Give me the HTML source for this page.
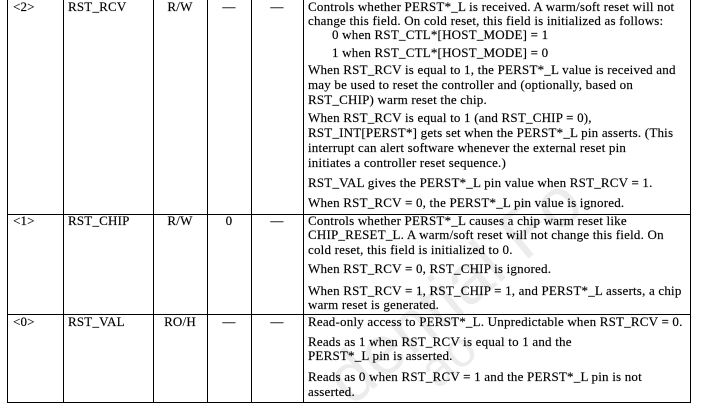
<!DOCTYPE html>
<html><head><meta charset="utf-8"><style>
html{overflow:hidden;width:704px;height:416px;}
html,body{margin:0;padding:0;background:#fff;}
body{width:704px;height:416px;position:relative;overflow:hidden;font-family:"Liberation Serif",serif;font-size:13px;color:#000;}
.t{position:absolute;white-space:nowrap;line-height:16px;letter-spacing:0.2px;-webkit-text-stroke:0.15px #000;}
.v{position:absolute;background:#000;width:1px;}
.h{position:absolute;background:#000;height:1px;}
.c{text-align:center;}
.wm{position:absolute;font-family:"Liberation Sans",sans-serif;font-size:70px;color:#ececec;transform:rotate(-40deg);white-space:nowrap;}
</style></head><body>
<div class="wm" style="left:300px;top:250px;">dential Fo</div>
<div class="wm" style="left:420px;top:330px;font-size:50px;">ao</div>

<div class="v" style="left:7px;top:0;height:403px"></div>
<div class="v" style="left:63px;top:0;height:403px"></div>
<div class="v" style="left:153px;top:0;height:403px"></div>
<div class="v" style="left:207px;top:0;height:403px"></div>
<div class="v" style="left:251px;top:0;height:403px"></div>
<div class="v" style="left:303px;top:0;height:403px"></div>
<div class="v" style="left:690px;top:0;height:403px"></div>
<div class="h" style="left:7px;top:214px;width:684px"></div>
<div class="h" style="left:7px;top:314px;width:684px"></div>
<div class="h" style="left:7px;top:402px;width:684px"></div>

<div class="t" style="left:13px;top:-1px">&lt;2&gt;</div>
<div class="t" style="left:68px;top:-1px">RST_RCV</div>
<div class="t c" style="left:153px;width:54px;top:-1px">R/W</div>
<div class="t c" style="left:207px;width:44px;top:-1px">—</div>
<div class="t c" style="left:251px;width:52px;top:-1px">—</div>

<div class="t" style="left:13px;top:213px">&lt;1&gt;</div>
<div class="t" style="left:68px;top:213px">RST_CHIP</div>
<div class="t c" style="left:153px;width:54px;top:213px">R/W</div>
<div class="t c" style="left:207px;width:44px;top:213px">0</div>
<div class="t c" style="left:251px;width:52px;top:213px">—</div>

<div class="t" style="left:13px;top:314px">&lt;0&gt;</div>
<div class="t" style="left:68px;top:314px">RST_VAL</div>
<div class="t c" style="left:153px;width:54px;top:314px">RO/H</div>
<div class="t c" style="left:207px;width:44px;top:314px">—</div>
<div class="t c" style="left:251px;width:52px;top:314px">—</div>

<div class="t" style="left:308px;top:-1px">Controls whether PERST*_L is received. A warm/soft reset will not</div>
<div class="t" style="left:308px;top:13px">change this field. On cold reset, this field is initialized as follows:</div>
<div class="t" style="left:332px;top:27px">0 when RST_CTL*[HOST_MODE] = 1</div>
<div class="t" style="left:332px;top:45px">1 when RST_CTL*[HOST_MODE] = 0</div>
<div class="t" style="left:308px;top:62px">When RST_RCV is equal to 1, the PERST*_L value is received and</div>
<div class="t" style="left:308px;top:77px">may be used to reset the controller and (optionally, based on</div>
<div class="t" style="left:308px;top:92px">RST_CHIP) warm reset the chip.</div>
<div class="t" style="left:308px;top:110px">When RST_RCV is equal to 1 (and RST_CHIP = 0),</div>
<div class="t" style="left:308px;top:125px">RST_INT[PERST*] gets set when the PERST*_L pin asserts. (This</div>
<div class="t" style="left:308px;top:140px">interrupt can alert software whenever the external reset pin</div>
<div class="t" style="left:308px;top:155px">initiates a controller reset sequence.)</div>
<div class="t" style="left:308px;top:175px">RST_VAL gives the PERST*_L pin value when RST_RCV = 1.</div>
<div class="t" style="left:308px;top:195px">When RST_RCV = 0, the PERST*_L pin value is ignored.</div>

<div class="t" style="left:308px;top:213px">Controls whether PERST*_L causes a chip warm reset like</div>
<div class="t" style="left:308px;top:227px">CHIP_RESET_L. A warm/soft reset will not change this field. On</div>
<div class="t" style="left:308px;top:242px">cold reset, this field is initialized to 0.</div>
<div class="t" style="left:308px;top:261px">When RST_RCV = 0, RST_CHIP is ignored.</div>
<div class="t" style="left:308px;top:283px">When RST_RCV = 1, RST_CHIP = 1, and PERST*_L asserts, a chip</div>
<div class="t" style="left:308px;top:297px">warm reset is generated.</div>

<div class="t" style="left:308px;top:314px">Read-only access to PERST*_L. Unpredictable when RST_RCV = 0.</div>
<div class="t" style="left:308px;top:334px">Reads as 1 when RST_RCV is equal to 1 and the</div>
<div class="t" style="left:308px;top:348px">PERST*_L pin is asserted.</div>
<div class="t" style="left:308px;top:369px">Reads as 0 when RST_RCV = 1 and the PERST*_L pin is not</div>
<div class="t" style="left:308px;top:384px">asserted.</div>
</body></html>
